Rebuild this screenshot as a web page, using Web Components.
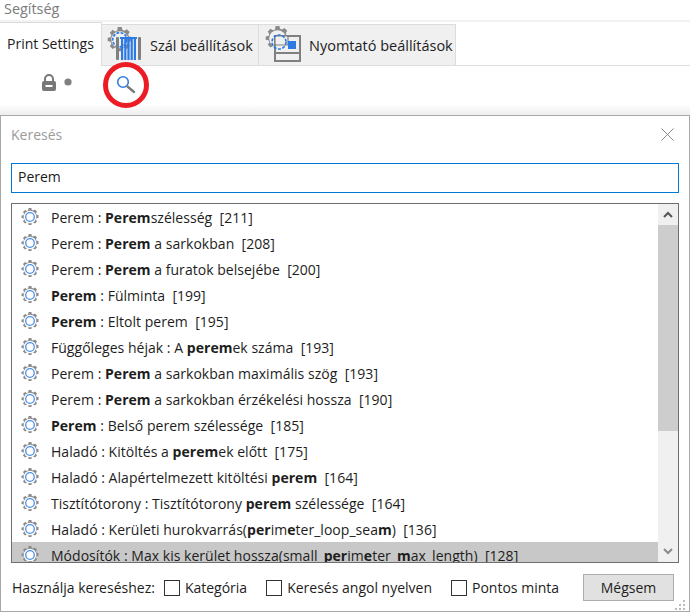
<!DOCTYPE html>
<html lang="hu"><head><meta charset="utf-8"><title>Keresés</title>
<style>
html,body{margin:0;padding:0;background:#fff;}
body{width:690px;height:612px;overflow:hidden;font:14px "Open Sans","Noto Sans",sans-serif;color:#1a1a1a;display:flex;flex-direction:column;}
</style></head><body>
<x-menu>Segítség</x-menu>
<x-tabbar>
  <x-tab active>Print Settings</x-tab>
  <x-tab kind="filament">Szál beállítások</x-tab>
  <x-tab kind="printer">Nyomtató beállítások</x-tab>
</x-tabbar>
<x-toolbar></x-toolbar>
<x-dialog heading="Keresés" value="Perem">
  <x-row>Perem : <b>Perem</b>szélesség&nbsp; [211]</x-row>
  <x-row>Perem : <b>Perem</b> a sarkokban&nbsp; [208]</x-row>
  <x-row>Perem : <b>Perem</b> a furatok belsejébe&nbsp; [200]</x-row>
  <x-row><b>Perem</b> : Fülminta&nbsp; [199]</x-row>
  <x-row><b>Perem</b> : Eltolt perem&nbsp; [195]</x-row>
  <x-row>Függőleges héjak : A <b>perem</b>ek száma&nbsp; [193]</x-row>
  <x-row>Perem : <b>Perem</b> a sarkokban maximális szög&nbsp; [193]</x-row>
  <x-row>Perem : <b>Perem</b> a sarkokban érzékelési hossza&nbsp; [190]</x-row>
  <x-row><b>Perem</b> : Belső perem szélessége&nbsp; [185]</x-row>
  <x-row>Haladó : Kitöltés a <b>perem</b>ek előtt&nbsp; [175]</x-row>
  <x-row>Haladó : Alapértelmezett kitöltési <b>perem</b>&nbsp; [164]</x-row>
  <x-row>Tisztítótorony : Tisztítótorony <b>perem</b> szélessége&nbsp; [164]</x-row>
  <x-row>Haladó : Kerületi hurokvarrás(<b>per</b>im<b>e</b>ter_loop_sea<b>m</b>)&nbsp; [136]</x-row>
  <x-row selected>Módosítók : Max kis kerület hossza(small_<b>per</b>im<b>e</b>ter_<b>m</b>ax_length)&nbsp; [128]</x-row>
</x-dialog>
<script>
const GEAR=`<path fill="#8a8a8a" d="M7.6 0h2.8l.4 2 1.5.6 1.7-1.1 2 2-1.1 1.7.6 1.5 2 .4v2.8l-2 .4-.6 1.5 1.1 1.7-2 2-1.7-1.1-1.5.6-.4 2H7.6l-.4-2-1.5-.6-1.7 1.1-2-2 1.1-1.7-.6-1.5-2-.4V7.6l2-.4.6-1.5-1.1-1.7 2-2 1.7 1.1 1.5-.6z"/>`;
function def(name,render){customElements.define(name,class extends HTMLElement{
  constructor(){super();this.attachShadow({mode:"open"});}
  connectedCallback(){this.shadowRoot.innerHTML=render(this);}
});}
const gear=(s=18)=>`<svg width="${s}" height="${s}" viewBox="0 0 18 18" aria-hidden="true">${GEAR}<circle cx="9" cy="9" r="6.3" fill="#fff"/><circle cx="9" cy="9" r="4.3" fill="none" stroke="#4a8fea" stroke-width="1.3"/></svg>`;

def("x-menu",()=>`<style>:host{display:block;height:20px;flex:none;padding-left:4px;font-size:14.4px;line-height:18px;color:#7b7b7b;border-bottom:2px solid #f2f2f2}</style><slot></slot>`);

def("x-tabbar",()=>`<style>:host{display:flex;flex:none;box-sizing:border-box;height:44px;align-items:flex-end;border-bottom:1px solid #dedede}</style><slot></slot>`);

const icons={
 filament:`<svg width="38" height="40" viewBox="0 0 38 40" aria-hidden="true"><g transform="translate(1,2) scale(1.42)">${GEAR}<circle cx="9" cy="9" r="6" fill="#f0f0f0"/><circle cx="9" cy="9" r="5" fill="none" stroke="#2c7be5" stroke-width="1.2" stroke-dasharray="2 1"/></g>
 <g fill="#2c7be5"><rect x="14" y="12" width="17" height="2"/><rect x="15" y="12" width="2.2" height="23"/><rect x="18.2" y="12" width="2.2" height="23"/><rect x="21.4" y="12" width="2.2" height="23"/><rect x="24.6" y="12" width="2.2" height="23"/><rect x="27.8" y="12" width="2.2" height="23"/></g>
 <g fill="#808080"><rect x="10" y="12" width="3" height="23" rx="1"/><rect x="32" y="12" width="3" height="23" rx="1"/></g></svg>`,
 printer:`<svg width="40" height="40" viewBox="0 0 40 40" aria-hidden="true"><g transform="translate(1,1) scale(1.39)">${GEAR}<circle cx="9" cy="9" r="6" fill="#f0f0f0"/></g>
 <rect x="11" y="11" width="25" height="25" fill="#f0f0f0" stroke="#808080" stroke-width="2"/><path d="M10 28h27" stroke="#808080" stroke-width="2"/><rect x="11" y="11" width="13" height="9" rx="1" fill="#f0f0f0" stroke="#808080" stroke-width="1.2"/><circle cx="15" cy="17" r="7" fill="none" stroke="#2c7be5" stroke-width="1.6" stroke-dasharray="3 1.5"/><rect x="24" y="16" width="8" height="8" fill="#2c7be5"/></svg>`};
def("x-tab",h=>{
 const a=h.hasAttribute("active"),k=h.getAttribute("kind");
 const box=a?"width:102px;height:44px;margin-bottom:-1px;padding:0 7px 2px;background:#fff;":
   k==="filament"?"width:157px;height:41px;padding-left:4px;background:#f0f0f0;":
   "width:197px;height:41px;padding-left:5px;background:#f0f0f0;";
 return `<style>:host{display:flex;align-items:center;box-sizing:border-box;${box}font-size:${a?14:14.5}px;color:#1d1d1d;white-space:nowrap;border:1px solid #dcdcdc;border-width:1px 1px 0 0}
 svg{flex:none;margin-right:${k==="filament"?"6px":"5px"};}</style>${k?icons[k]:""}<span><slot></slot></span>`;
});

def("x-toolbar",()=>`<style>:host{display:flex;flex:none;height:49px;position:relative;align-items:flex-start;padding:8px 0 0 41px;box-sizing:border-box;background:linear-gradient(#fff 0,#fff 38px,#eee 49px)}
 .search{position:absolute;left:103px;top:-4px;width:46px;height:46px;box-sizing:border-box;border:5px solid #ec1c24;border-radius:50%;display:flex;align-items:center;justify-content:center;}
 .dot{margin:4px 0 0 7px}
 </style><svg width="16" height="18" viewBox="0 0 16 18" aria-hidden="true"><path fill="none" stroke="#787878" stroke-width="2" d="M4 8V5a4 4 0 0 1 8 0v3"/><rect x="1" y="7" width="14" height="10" rx="2" fill="#787878"/><rect x="4.5" y="11" width="7" height="2" fill="#fff"/></svg><svg class="dot" width="8" height="8" viewBox="0 0 8 8" aria-hidden="true"><circle cx="4" cy="4" r="3.6" fill="#808080"/></svg>
 <div class="search"><svg width="20" height="20" viewBox="0 0 20 20" aria-hidden="true"><circle cx="7" cy="7" r="5.3" fill="none" stroke="#2f7fe0" stroke-width="1.6"/><path d="M11.5 11.5L18 17" stroke="#7a7a7a" stroke-width="2.4" stroke-linecap="round"/></svg></div>`);

def("x-dialog",h=>`<style>
 :host{display:flex;flex-direction:column;flex:1;min-height:0;box-sizing:border-box;border:1px solid #a8a8a8;padding:0 10px;position:relative;background:#fff}
 header{display:flex;justify-content:space-between;align-items:center;height:47px;padding-bottom:10px;box-sizing:border-box;flex:none;color:#9b9b9b;font-size:14px;padding-right:5px;}
 .input{flex:none;box-sizing:border-box;height:30px;border:1px solid #0078d4;padding:0 6px;line-height:26px;font-size:14px;color:#1a1a1a;margin-bottom:10px}
 .list{flex:none;box-sizing:border-box;height:360px;border:1px solid #6e6e6e;display:flex;overflow:hidden;}
 .rows{flex:1;min-width:0;overflow:hidden}
 .sb{flex:none;width:20px;background:#f0f0f0;display:flex;flex-direction:column;}
 .arrow{flex:none;height:21px;display:flex;align-items:center;justify-content:center}
 .track{flex:1;min-height:0}
 .thumb{height:206px;background:#cdcdcd}
 footer{flex:none;display:flex;align-items:center;height:49px;font-size:14px;color:#1d1d1d;white-space:nowrap}
 .lbl{flex:none;margin:0 9px 0 1px}
 button{flex:none;font:inherit;color:inherit;margin-left:auto;margin-right:5px;width:91px;height:27px;background:#e1e1e1;border:1px solid #adadad;padding:0}
 .grip{position:absolute;right:4px;bottom:1px;}
 </style>
 <header><span>${h.getAttribute("heading")}</span><svg width="13" height="13" viewBox="0 0 13 13" aria-hidden="true"><path d="M.5.5l12 12M12.5.5l-12 12" stroke="#8a8a8a" stroke-width="1"/></svg></header>
 <div class="input">${h.getAttribute("value")}</div>
 <div class="list"><div class="rows"><slot></slot></div>
 <div class="sb"><div class="arrow"><svg width="10" height="7" viewBox="0 0 10 7" aria-hidden="true"><path d="M1 6l4-4 4 4" fill="none" stroke="#555" stroke-width="2"/></svg></div>
 <div class="track"><div class="thumb"></div></div>
 <div class="arrow"><svg width="10" height="7" viewBox="0 0 10 7" aria-hidden="true"><path d="M1 1l4 4 4-4" fill="none" stroke="#8a8a8a" stroke-width="2"/></svg></div></div></div>
 <footer><span class="lbl">Használja kereséshez:</span><x-check>Kategória</x-check><x-check>Keresés angol nyelven</x-check><x-check>Pontos minta</x-check><button>Mégsem</button></footer>
 <svg class="grip" width="10" height="10" viewBox="0 0 10 10" aria-hidden="true"><g fill="#bdbdbd"><rect x="8" y="0" width="2" height="2"/><rect x="4" y="4" width="2" height="2"/><rect x="8" y="4" width="2" height="2"/><rect x="0" y="8" width="2" height="2"/><rect x="4" y="8" width="2" height="2"/><rect x="8" y="8" width="2" height="2"/></g></svg>`);

def("x-row",h=>`<style>:host{display:flex;align-items:center;height:26px;padding-left:9px;box-sizing:border-box;white-space:nowrap;font-size:14px;letter-spacing:.03px;color:#1d1d1d;${h.hasAttribute("selected")?"background:#c8c8c8;":""}}
 svg{flex:none;margin-right:12px}</style>${gear(18)}<span><slot></slot></span>`);

def("x-check",()=>`<style>:host{flex:none;display:inline-flex;align-items:center;margin-right:19px;gap:5px}
 i{display:block;width:16px;height:16px;box-sizing:border-box;border:1px solid #333;background:#fff}
 </style><i></i><span><slot></slot></span>`);
</script>
</body></html>
